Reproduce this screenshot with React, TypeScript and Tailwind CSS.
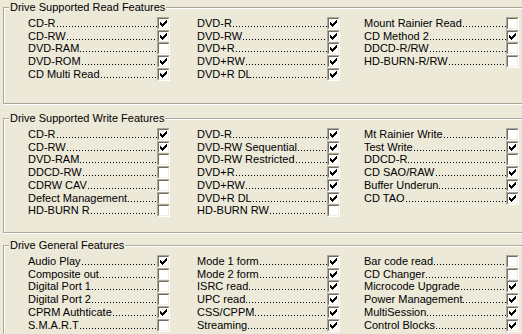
type Item = [string, boolean];

type Section = {
  title: string;
  box: string;
  cols: Item[][];
};

const sections: Section[] = [
  {
    title: "Drive Supported Read Features",
    box: "mt-[1px] h-[103px]",
    cols: [
      [
        ["CD-R", true],
        ["CD-RW", true],
        ["DVD-RAM", false],
        ["DVD-ROM", true],
        ["CD Multi Read", true],
      ],
      [
        ["DVD-R", true],
        ["DVD-RW", true],
        ["DVD+R", true],
        ["DVD+RW", true],
        ["DVD+R DL", true],
      ],
      [
        ["Mount Rainier Read", false],
        ["CD Method 2", true],
        ["DDCD-R/RW", false],
        ["HD-BURN-R/RW", false],
      ],
    ],
  },
  {
    title: "Drive Supported Write Features",
    box: "mt-[8px] h-[121px]",
    cols: [
      [
        ["CD-R", true],
        ["CD-RW", true],
        ["DVD-RAM", false],
        ["DDCD-RW", false],
        ["CDRW CAV", false],
        ["Defect Management", false],
        ["HD-BURN R", false],
      ],
      [
        ["DVD-R", true],
        ["DVD-RW Sequential", true],
        ["DVD-RW Restricted", true],
        ["DVD+R", true],
        ["DVD+RW", true],
        ["DVD+R DL", true],
        ["HD-BURN RW", false],
      ],
      [
        ["Mt Rainier Write", false],
        ["Test Write", true],
        ["DDCD-R", false],
        ["CD SAO/RAW", true],
        ["Buffer Underun", true],
        ["CD TAO", true],
      ],
    ],
  },
  {
    title: "Drive General Features",
    box: "mt-[6px] h-[120px]",
    cols: [
      [
        ["Audio Play", true],
        ["Composite out", false],
        ["Digital Port 1", false],
        ["Digital Port 2", false],
        ["CPRM Authticate", true],
        ["S.M.A.R.T", false],
      ],
      [
        ["Mode 1 form", true],
        ["Mode 2 form", true],
        ["ISRC read", true],
        ["UPC read", true],
        ["CSS/CPPM", true],
        ["Streaming", true],
      ],
      [
        ["Bar code read", false],
        ["CD Changer", false],
        ["Microcode Upgrade", true],
        ["Power Management", true],
        ["MultiSession", true],
        ["Control Blocks", true],
      ],
    ],
  },
];

const colClass = ["w-[142px]", "ml-[27px] w-[143px]", "ml-[24px] w-[155px]"];

function Check({ on }: { on: boolean }) {
  return (
    <span className="block shrink-0 w-[13px] h-[13px] border border-t-[#ACA899] border-l-[#ACA899] border-b-white border-r-white">
      <span className="block w-full h-full border border-t-[#716F64] border-l-[#716F64] border-b-[#F1EFE2] border-r-[#F1EFE2] bg-white">
        {on && (
          <svg width="9" height="9" viewBox="0 0 9 9" shapeRendering="crispEdges" className="block">
            <g fill="#000">
              <rect x="7" y="1" width="1" height="1" />
              <rect x="6" y="2" width="2" height="1" />
              <rect x="1" y="3" width="1" height="1" />
              <rect x="5" y="3" width="3" height="1" />
              <rect x="1" y="4" width="2" height="1" />
              <rect x="4" y="4" width="3" height="1" />
              <rect x="1" y="5" width="5" height="1" />
              <rect x="2" y="6" width="3" height="1" />
              <rect x="3" y="7" width="1" height="1" />
            </g>
          </svg>
        )}
      </span>
    </span>
  );
}

function Row({ label, on }: { label: string; on: boolean }) {
  return (
    <div className="flex h-[12.75px] items-center">
      <span className="whitespace-nowrap leading-[13px]">{label}</span>
      {/* dotted leader up to the checkbox */}
      <span className="h-[13px] min-w-0 flex-1 bg-[linear-gradient(to_right,transparent_1px,#000_1px,#000_2px,transparent_2px)] bg-[length:3px_1px] bg-[position:0_9px] bg-repeat-x" />
      <Check on={on} />
    </div>
  );
}

function GroupBox({ section }: { section: Section }) {
  return (
    <fieldset
      className={`${section.box} ml-[3px] w-[540px] border border-[#ACA899] pt-[3px] shadow-[inset_1px_1px_0_#fff,0_1px_0_#fff]`}
    >
      <legend className="ml-[5px] h-[13px] bg-[#ECE9D8] px-[1px] leading-[13px]">
        {section.title}
      </legend>
      <div className="flex pl-[24px]">
        {section.cols.map((col, i) => (
          <div key={i} className={`flex flex-col ${colClass[i]}`}>
            {col.map(([label, on]) => (
              <Row key={label} label={label} on={on} />
            ))}
          </div>
        ))}
      </div>
    </fieldset>
  );
}

export default function App() {
  return (
    <div className="h-[334px] w-[522px] overflow-hidden bg-[#ECE9D8] font-['Liberation_Sans',Arial,sans-serif] text-[11px] text-black">
      {sections.map((s) => (
        <GroupBox key={s.title} section={s} />
      ))}
    </div>
  );
}
